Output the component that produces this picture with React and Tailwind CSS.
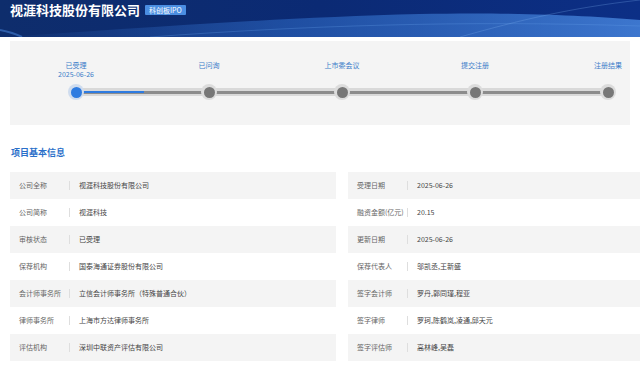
import React from "react";

const STEPS = [
  { label: "已受理", date: "2025-06-26", active: true },
  { label: "已问询" },
  { label: "上市委会议" },
  { label: "提交注册" },
  { label: "注册结果" },
];

const LEFT = [
  ["公司全称", "视涯科技股份有限公司"],
  ["公司简称", "视涯科技"],
  ["审核状态", "已受理"],
  ["保荐机构", "国泰海通证券股份有限公司"],
  ["会计师事务所", "立信会计师事务所（特殊普通合伙）"],
  ["律师事务所", "上海市方达律师事务所"],
  ["评估机构", "深圳中联资产评估有限公司"],
];

const RIGHT = [
  ["受理日期", "2025-06-26"],
  ["融资金额(亿元)", "20.15"],
  ["更新日期", "2025-06-26"],
  ["保荐代表人", "邬凯丞,王新盛"],
  ["签字会计师", "罗丹,郭同瑾,程亚"],
  ["签字律师", "罗珂,陈鹤岚,凌通,邱天元"],
  ["签字评估师", "高林峰,吴磊"],
];

function Row({ label, value, i }) {
  return (
    <div className={`h-[27px] flex items-center pl-[9px] text-[7px] leading-[9px] ${i % 2 === 0 ? "bg-[#f4f4f4]" : "bg-white"}`}>
      <span className="w-[50px] shrink-0 text-[#666] whitespace-nowrap">{label}</span>
      <span className="w-px h-[9px] bg-[#dedede]" />
      <span className="ml-[9px] text-[#444] whitespace-nowrap">{value}</span>
    </div>
  );
}

function HeaderWaves() {
  return (
    <svg className="absolute inset-0" width="640" height="37" viewBox="0 0 640 37" preserveAspectRatio="none">
      <defs>
        <linearGradient id="wv" x1="0" y1="0" x2="1" y2="0">
          <stop offset="0" stopColor="#3a78d6" stopOpacity="0" />
          <stop offset="0.45" stopColor="#2f6cc8" stopOpacity="0.55" />
          <stop offset="1" stopColor="#4d8ee6" stopOpacity="0.75" />
        </linearGradient>
      </defs>
      <path d="M0 37 C120 30 260 18 420 14 C520 12 590 16 640 20 L640 37 Z" fill="url(#wv)" />
      <path d="M150 37 C300 26 460 20 640 26" stroke="#6aa3ee" strokeOpacity="0.35" strokeWidth="0.8" fill="none" />
      <path d="M460 37 C520 20 570 8 640 0" stroke="#7fb2f2" strokeOpacity="0.35" strokeWidth="0.8" fill="none" />
      <path d="M0 30 C10 32 18 35 22 37" stroke="#4d8ee6" strokeOpacity="0.5" strokeWidth="2" fill="none" />
    </svg>
  );
}

export default function App() {
  return (
    <div className="w-[640px] h-[369px] overflow-hidden bg-white font-['Noto_Sans_CJK_SC',sans-serif]">
      <div className="relative h-[37px] bg-gradient-to-r from-[#0e2d6c] via-[#0b2a74] to-[#0c2f86] overflow-hidden">
        <HeaderWaves />
        <div className="relative flex items-center gap-[5px] pl-[10px] pt-[2px]">
          <span className="text-[13px] leading-[15px] font-bold text-white">视涯科技股份有限公司</span>
          <span className="h-[10px] px-[4px] flex items-center bg-[#4a8ee2] text-white text-[7px] leading-[10px] rounded-[1px]">科创板IPO</span>
        </div>
      </div>

      <div className="mt-[4px] mx-[10px] h-[84px] bg-[#f4f4f4] relative">
        <div className="absolute left-[66px] w-[532px] top-[47px] h-[8px] bg-[#d9d9d9] flex items-center">
          <div className="w-full h-[3px] bg-[#8c8c8c]" />
          <div className="absolute left-0 w-[68px] h-[2px] bg-[#2e7be0]" />
        </div>
        <div className="relative flex gap-[93px] pl-[46px] pt-[20px]">
          {STEPS.map((s) => (
            <div key={s.label} className="w-[40px] flex flex-col items-center">
              <div className="h-[18px] flex flex-col items-center text-[7px] leading-[9px] text-[#3a7cc9] whitespace-nowrap">
                <span>{s.label}</span>
                {s.date && <span>{s.date}</span>}
              </div>
              <div className={`mt-[5px] w-[16px] h-[16px] rounded-full flex items-center justify-center ${s.active ? "bg-[#cfdcee]" : "bg-[#dcdcdc]"}`}>
                <div className={`w-[11px] h-[11px] rounded-full ${s.active ? "bg-[#2e7be0]" : "bg-[#777777]"}`} />
              </div>
            </div>
          ))}
        </div>
      </div>

      <div className="mt-[22px] pl-[11px] text-[9px] leading-[12px] font-bold text-[#2a6fc9]">项目基本信息</div>

      <div className="mt-[13px] ml-[10px] grid grid-cols-[326px_326px] gap-x-[12px]">
        <div>
          {LEFT.map(([l, v], i) => (
            <Row key={l} label={l} value={v} i={i} />
          ))}
        </div>
        <div>
          {RIGHT.map(([l, v], i) => (
            <Row key={l} label={l} value={v} i={i} />
          ))}
        </div>
      </div>
    </div>
  );
}
